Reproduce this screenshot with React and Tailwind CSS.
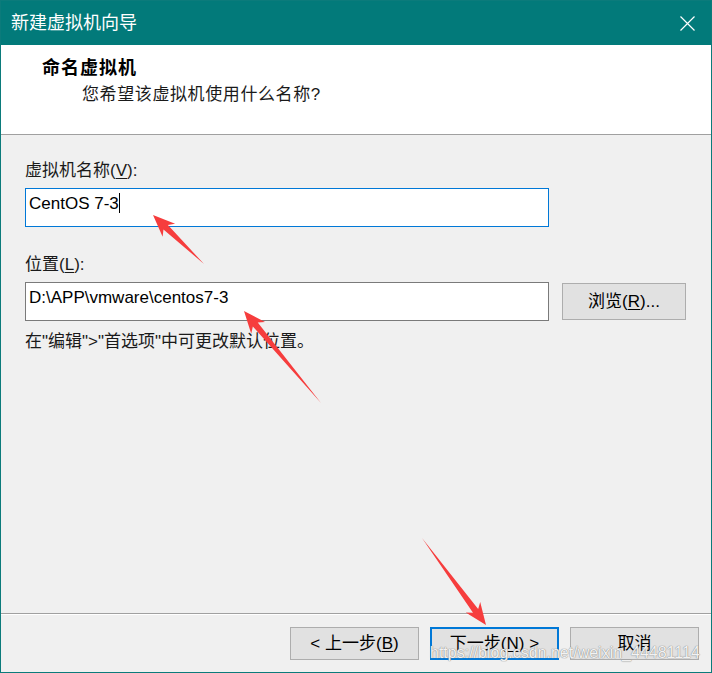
import React from "react";

const FONT = "font-['Liberation_Sans','Noto_Sans_CJK_SC',sans-serif]";

// red pointer arrows drawn over the dialog
const arrows = [
  { tip: [153, 215], tail: [204, 264] },
  { tip: [244, 311], tail: [321, 403] },
  { tip: [486, 625], tail: [422, 538] },
];

function arrowPoints({ tip, tail }) {
  const dx = tail[0] - tip[0];
  const dy = tail[1] - tip[1];
  const len = Math.hypot(dx, dy);
  const ux = dx / len;
  const uy = dy / len;
  const nx = -uy;
  const ny = ux;
  const L = 22;
  const W = 9;
  const w = 3.2;
  const at = (d, s) => `${tip[0] + ux * d + nx * s},${tip[1] + uy * d + ny * s}`;
  return [
    `${tip[0]},${tip[1]}`,
    at(L, W),
    at(L * 0.8, w),
    `${tail[0]},${tail[1]}`,
    at(L * 0.8, -w),
    at(L, -W),
  ].join(" ");
}

function Btn({ children, focused }) {
  return (
    <button
      className={`w-[129px] h-[33px] flex items-center justify-center bg-[#e1e1e1] text-[17px] text-black ${
        focused ? "border-2 border-[#0078d7]" : "border border-[#adadad]"
      }`}
    >
      {children}
    </button>
  );
}

export default function App() {
  return (
    <div
      className={`relative w-[712px] h-[673px] border border-[#0b7b7b] bg-[#f0f0f0] flex flex-col overflow-hidden ${FONT}`}
    >
      {/* title bar */}
      <div className="h-[44px] bg-[#027a7a] flex items-center justify-between pl-[10px] pr-[16px]">
        <span className="text-white text-[18px]">新建虚拟机向导</span>
        <svg width="15" height="15" viewBox="0 0 15 15" className="mt-px">
          <path d="M0.5 0.5L14.5 14.5M14.5 0.5L0.5 14.5" stroke="#fff" strokeWidth="1.2" />
        </svg>
      </div>

      {/* header */}
      <div className="h-[89px] bg-white pl-[41px] pt-[11px] leading-[24px]">
        <div className="text-[18px] font-bold tracking-[1px] text-black">命名虚拟机</div>
        <div className="mt-[3px] ml-[40px] text-[17px] tracking-[0.6px] text-[#1a1a1a]">
          您希望该虚拟机使用什么名称?
        </div>
      </div>
      <div className="h-px bg-[#a0a0a0]" />

      {/* content */}
      <div className="h-[478px] pl-[24px] pt-[24px] text-[17px] leading-[24px] text-[#1a1a1a]">
        <div>
          虚拟机名称(<u className="underline-offset-2">V</u>):
        </div>
        <div className="mt-[5px] w-[524px] h-[39px] border border-[#0078d7] bg-white pl-[3px] pt-[3px] text-black flex items-start">
          <span>CentOS 7-3</span>
          <span className="w-px h-[20px] bg-black mt-[1px]" />
        </div>

        <div className="mt-[26px]">
          位置(<u className="underline-offset-2">L</u>):
        </div>
        <div className="mt-[5px] flex items-center gap-[13px]">
          <div className="w-[524px] h-[39px] border border-[#7a7a7a] bg-white pl-[3px] pt-[3px] text-black">
            D:\APP\vmware\centos7-3
          </div>
          <button className="w-[124px] h-[37px] bg-[#e1e1e1] border border-[#adadad] text-[17px] text-black">
            浏览(<u className="underline-offset-2">R</u>)...
          </button>
        </div>

        <div className="mt-[9px]">在"编辑"&gt;"首选项"中可更改默认位置。</div>
      </div>

      {/* footer */}
      <div className="h-px bg-[#a0a0a0]" />
      <div className="h-px bg-white" />
      <div className="flex-1 flex justify-end items-start gap-[11px] pt-[12px] pr-[12px]">
        <Btn>
          &lt; 上一步(<u className="underline-offset-2">B</u>)
        </Btn>
        <Btn focused>
          下一步(<u className="underline-offset-2">N</u>) &gt;
        </Btn>
        <Btn>取消</Btn>
      </div>

      {/* annotation overlay */}
      <svg className="absolute left-[-1px] top-[-1px] pointer-events-none" width="712" height="673">
        {arrows.map((a, i) => (
          <polygon key={i} points={arrowPoints(a)} fill="#f63d3d" />
        ))}
      </svg>

      <div className="absolute left-[429px] top-[642px] text-[16px] leading-[20px] text-white/90 [text-shadow:0_0_1px_#777,0_0_1px_#999] font-['Liberation_Sans',sans-serif] pointer-events-none">
        https://blog.csdn.net/weixin_44481114
      </div>
    </div>
  );
}
